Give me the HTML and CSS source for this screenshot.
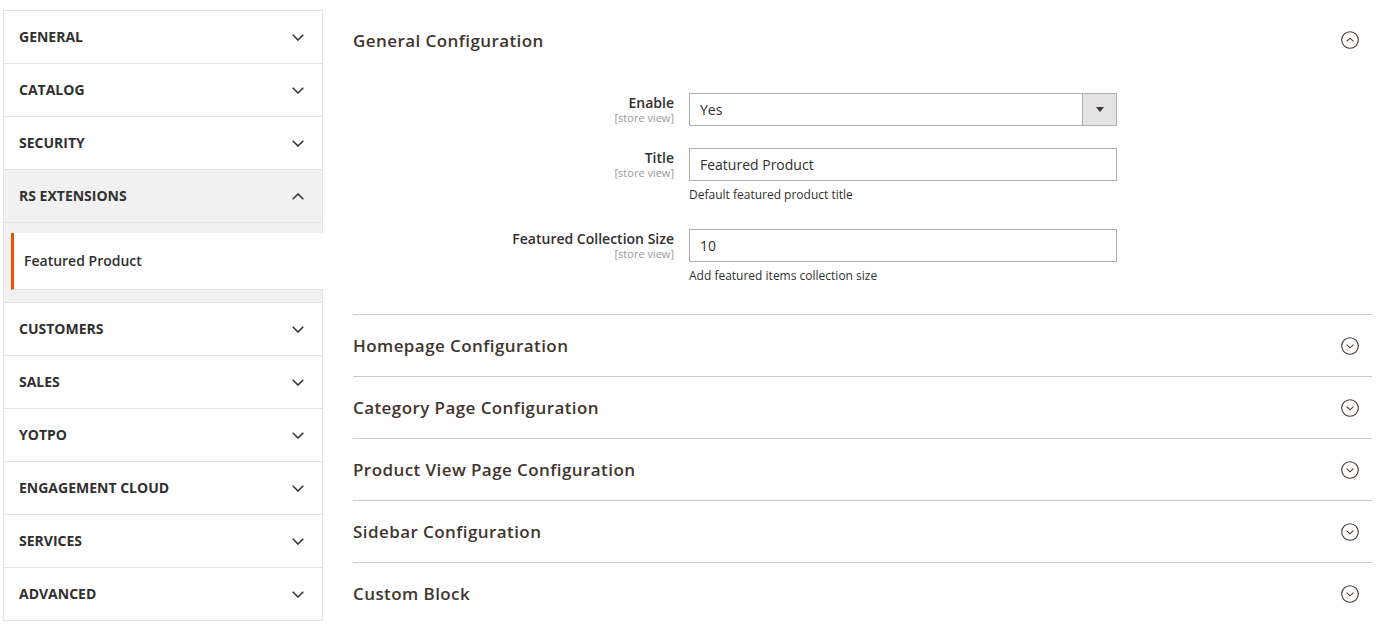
FILE: index.html
```html
<!DOCTYPE html>
<html>
<head>
<meta charset="utf-8">
<link rel="stylesheet" href="styles.css">
</head>
<body>
<div class="page">
  <nav class="sidebar">
    <div class="nav-item"><span>GENERAL</span><svg class="chev" viewBox="0 0 12 7"><path d="M0.7 0.7 L6 6 L11.3 0.7" /></svg></div>
    <div class="nav-item"><span>CATALOG</span><svg class="chev" viewBox="0 0 12 7"><path d="M0.7 0.7 L6 6 L11.3 0.7" /></svg></div>
    <div class="nav-item"><span>SECURITY</span><svg class="chev" viewBox="0 0 12 7"><path d="M0.7 0.7 L6 6 L11.3 0.7" /></svg></div>
    <div class="nav-item open"><span>RS EXTENSIONS</span><svg class="chev" viewBox="0 0 12 7"><path d="M0.7 6.3 L6 1 L11.3 6.3" /></svg></div>
    <div class="nav-sub">
      <div class="sub-link">Featured Product</div>
    </div>
    <div class="nav-item"><span>CUSTOMERS</span><svg class="chev" viewBox="0 0 12 7"><path d="M0.7 0.7 L6 6 L11.3 0.7" /></svg></div>
    <div class="nav-item"><span>SALES</span><svg class="chev" viewBox="0 0 12 7"><path d="M0.7 0.7 L6 6 L11.3 0.7" /></svg></div>
    <div class="nav-item"><span>YOTPO</span><svg class="chev" viewBox="0 0 12 7"><path d="M0.7 0.7 L6 6 L11.3 0.7" /></svg></div>
    <div class="nav-item"><span>ENGAGEMENT CLOUD</span><svg class="chev" viewBox="0 0 12 7"><path d="M0.7 0.7 L6 6 L11.3 0.7" /></svg></div>
    <div class="nav-item"><span>SERVICES</span><svg class="chev" viewBox="0 0 12 7"><path d="M0.7 0.7 L6 6 L11.3 0.7" /></svg></div>
    <div class="nav-item"><span>ADVANCED</span><svg class="chev" viewBox="0 0 12 7"><path d="M0.7 0.7 L6 6 L11.3 0.7" /></svg></div>
  </nav>

  <main class="content">
    <section class="cfg first">
      <div class="cfg-head">
        <h2>General Configuration</h2>
        <svg class="circ" viewBox="0 0 18 18"><circle cx="9" cy="9" r="8.3"/><path d="M5.6 10.4 L9 7.2 L12.4 10.4"/></svg>
      </div>
      <div class="fieldset">
        <div class="field">
          <div class="label"><span class="lbl">Enable</span><span class="scope">[store view]</span></div>
          <div class="control">
            <div class="select"><span class="val">Yes</span><span class="sel-btn"><i class="tri"></i></span></div>
          </div>
        </div>
        <div class="field">
          <div class="label"><span class="lbl">Title</span><span class="scope">[store view]</span></div>
          <div class="control">
            <div class="input">Featured Product</div>
            <div class="note">Default featured product title</div>
          </div>
        </div>
        <div class="field">
          <div class="label"><span class="lbl">Featured Collection Size</span><span class="scope">[store view]</span></div>
          <div class="control">
            <div class="input">10</div>
            <div class="note">Add featured items collection size</div>
          </div>
        </div>
      </div>
    </section>
    <section class="cfg">
      <div class="cfg-head"><h2>Homepage Configuration</h2><svg class="circ" viewBox="0 0 18 18"><circle cx="9" cy="9" r="8.3"/><path d="M5.6 7.6 L9 10.8 L12.4 7.6"/></svg></div>
    </section>
    <section class="cfg">
      <div class="cfg-head"><h2>Category Page Configuration</h2><svg class="circ" viewBox="0 0 18 18"><circle cx="9" cy="9" r="8.3"/><path d="M5.6 7.6 L9 10.8 L12.4 7.6"/></svg></div>
    </section>
    <section class="cfg">
      <div class="cfg-head"><h2>Product View Page Configuration</h2><svg class="circ" viewBox="0 0 18 18"><circle cx="9" cy="9" r="8.3"/><path d="M5.6 7.6 L9 10.8 L12.4 7.6"/></svg></div>
    </section>
    <section class="cfg">
      <div class="cfg-head"><h2>Sidebar Configuration</h2><svg class="circ" viewBox="0 0 18 18"><circle cx="9" cy="9" r="8.3"/><path d="M5.6 7.6 L9 10.8 L12.4 7.6"/></svg></div>
    </section>
    <section class="cfg">
      <div class="cfg-head"><h2>Custom Block</h2><svg class="circ" viewBox="0 0 18 18"><circle cx="9" cy="9" r="8.3"/><path d="M5.6 7.6 L9 10.8 L12.4 7.6"/></svg></div>
    </section>
  </main>
</div>
</body>
</html>
```

FILE: styles.css
```css
* { box-sizing: border-box; }
html, body { margin: 0; padding: 0; background: #fff; }
body {
  font-family: "Open Sans", "Liberation Sans", sans-serif;
  color: #303030;
  font-size: 14px;
}
.page {
  display: flex;
  align-items: flex-start;
  padding: 10px 17px 0 3px;
  gap: 30px;
}
.sidebar {
  width: 320px;
  flex: none;
  border: 1px solid #e3e3e3;
  border-bottom: 0;
}
.nav-item {
  height: 53px;
  border-bottom: 1px solid #e3e3e3;
  display: flex;
  align-items: center;
  justify-content: space-between;
  padding: 0 18px 0 15px;
  font-size: 14px;
  font-weight: 700;
  color: #303030;
}
.nav-item span { padding-bottom: 1px; }
.nav-item.open { background: #f1f1f1; }
.chev {
  width: 12px;
  height: 7px;
  fill: none;
  stroke: #303030;
  stroke-width: 1.5;
}
.nav-sub {
  background: #f1f1f1;
  padding: 10px 0 12px 7px;
  border-bottom: 1px solid #e3e3e3;
}
.sub-link {
  background: #fff;
  margin-right: -1px;
  height: 57px;
  border-left: 3px solid #eb5202;
  border-bottom: 1px solid #e3e3e3;
  display: flex;
  align-items: center;
  padding-left: 10px;
  padding-bottom: 2px;
  font-weight: 600;
  font-size: 14px;
  color: #303030;
}
.content {
  flex: 1;
  min-width: 0;
}
.cfg { border-top: 1px solid #cccccc; }
.cfg.first { border-top: 0; border-bottom: 0; }
.cfg-head {
  height: 61px;
  display: flex;
  align-items: center;
  justify-content: space-between;
  padding: 0 13px 0 0;
}
.cfg.first .cfg-head { height: 62px; padding-bottom: 2px; }
.cfg-head h2 {
  margin: 0;
  font-size: 17px;
  font-weight: 600;
  color: #41362f;
  letter-spacing: 0.42px;
}
.circ {
  width: 18px;
  height: 18px;
  fill: none;
  stroke: #41362f;
  stroke-width: 1.1;
}
.fieldset {
  padding: 21px 0 26px 0;
  display: flex;
  flex-direction: column;
  gap: 22px;
}
.field {
  display: grid;
  grid-template-columns: 321px 428px;
  column-gap: 15px;
}
.label {
  display: flex;
  flex-direction: column;
  align-items: flex-end;
  text-align: right;
  padding-top: 1px;
}
.lbl {
  font-size: 14px;
  font-weight: 600;
  line-height: 18px;
  color: #303030;
}
.scope {
  font-size: 11px;
  line-height: 12px;
  color: #999999;
}
.select, .input {
  height: 33px;
  border: 1px solid #adadad;
  display: flex;
  align-items: center;
  font-size: 14px;
  color: #303030;
  background: #fff;
}
.input { padding-left: 10px; }
.select { justify-content: space-between; }
.val { padding-left: 10px; }
.sel-btn {
  width: 34px;
  height: 100%;
  background: #e3e3e3;
  border-left: 1px solid #adadad;
  display: flex;
  align-items: center;
  justify-content: center;
}
.tri {
  width: 0;
  height: 0;
  border-left: 4px solid transparent;
  border-right: 4px solid transparent;
  border-top: 5px solid #41362f;
}
.note {
  margin-top: 6px;
  font-size: 12px;
  line-height: 16px;
  padding-bottom: 4px;
  color: #303030;
}
```
